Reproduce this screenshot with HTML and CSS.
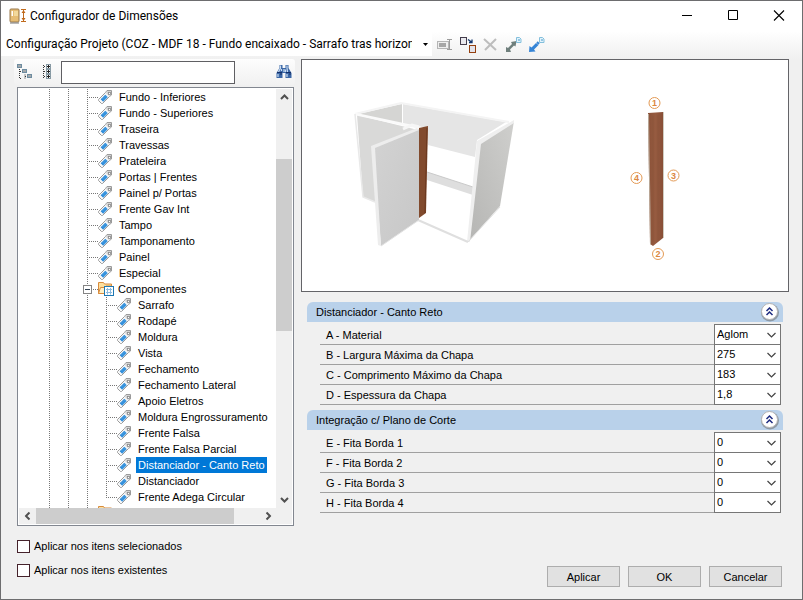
FILE: index.html
```html
<!DOCTYPE html>
<html lang="pt-BR">
<head>
<meta charset="utf-8">
<title>Configurador de Dimensões</title>
<link rel="stylesheet" href="styles.css">
</head>
<body>
<svg class="defs" aria-hidden="true">
  <symbol id="tag" viewBox="0 0 16 16">
    <path d="M1.500 10.500 8.500 3.500 10 1.500H14.500V6L12.500 7.500 5.500 14.500H4.500L1.500 11.500Z" fill="#f8f8f8" stroke="#9a9a9a"/>
    <path d="M10.500 2H14V5.500L12 7 9 4Z" fill="#d2d2d2"/>
    <rect x="11.500" y="3.500" width="2" height="2" fill="#fff" stroke="#888" stroke-width=".8"/>
    <path d="M3.700 10.300 8.300 5.700 10.700 8.200 6.200 12.700Z" fill="#2586d6"/>
    <path d="M5 10.300 9.300 6.500M6 11.500 10.300 7.500" stroke="#66b3ee" stroke-width=".6"/>
  </symbol>
  <symbol id="folder" viewBox="0 0 17 16">
    <path d="M1.500 12.500V1.500H6.500L7.500 3H14.500V12.500Z" fill="#fbdf9f" stroke="#d88b3c"/>
    <path d="M1.500 12.500 3.500 6.500H8L9 5H15V12.500Z" fill="#fff0c6" stroke="#d88b3c"/>
    <rect x="7.500" y="5.500" width="9" height="9" fill="#fff" stroke="#1e78b4"/>
    <path d="M9 8.500H15M9 11.500H15M10.500 7V13.500M13.500 7V13.500" stroke="#8bbbe0"/>
  </symbol>
  <symbol id="chev" viewBox="0 0 9 6"><path d="M1 1 4.500 4.500 8 1" fill="none" stroke="currentColor" stroke-width="2"/></symbol>
  <symbol id="chev-thin" viewBox="0 0 9 6"><path d="M.5 1 4.500 5 8.500 1" fill="none" stroke="currentColor" stroke-width="1.200"/></symbol>
  <symbol id="collapse" viewBox="0 0 20 20">
    <circle cx="10" cy="10.500" r="9" fill="#8d99a5"/>
    <circle cx="9.500" cy="9.500" r="8" fill="#fff" stroke="#b5b5b5"/>
    <path d="M6.500 9 9.500 6 12.500 9M6.500 13 9.500 10 12.500 13" fill="none" stroke="#1d2b80" stroke-width="1.500"/>
  </symbol>
</svg>
<div class="window">
  <header class="titlebar">
    <svg class="app-icon" viewBox="0 0 17 16"><rect x="1" y="1" width="9" height="13" rx="1" fill="#e6bd75" stroke="#98784c"/><path d="M2.500 3V8H4V3Z" fill="#fff"/><path d="M5 3H9V8H5Z" fill="#f3d99b"/><path d="M1 15H10" stroke="#777"/><path d="M12 1.500H17M12 13.500H17M14.500 2V13" stroke="#c06a1c"/><path d="M12.500 5 14.500 2 16.500 5ZM12.500 10 14.500 13 16.500 10Z" fill="#c06a1c"/></svg>
    <h1>Configurador de Dimensões</h1>
    <div class="window-buttons">
      <button type="button" aria-label="Minimizar"><svg viewBox="0 0 12 12"><path d="M1 5.500H11" stroke="#000"/></svg></button>
      <button type="button" aria-label="Maximizar"><svg viewBox="0 0 12 12"><path d="M1.500 .5H10.500V9.500H1.500Z" fill="none" stroke="#000"/></svg></button>
      <button type="button" aria-label="Fechar"><svg viewBox="0 0 12 12"><path d="M1 .5 11 10.500M11 .5 1 10.500" stroke="#000" stroke-width="1.100"/></svg></button>
    </div>
  </header>

  <div class="toolbar">
    <div class="project">
      <select aria-label="Configuração do projeto"><option>Configuração Projeto (COZ - MDF 18 - Fundo encaixado - Sarrafo tras horizontal)</option></select>
      <svg viewBox="0 0 5 3"><path d="M0 0H5L2.500 3Z"/></svg>
    </div>
    <button type="button" aria-label="Renomear"><svg viewBox="0 0 17 17"><rect x="1.500" y="5.500" width="11" height="7" fill="#eee" stroke="#b5b5b5"/><path d="M3 7H10V11H3Z" fill="#a6a6a6"/><path d="M11 3.500H16M11 13.500H16M13.500 4V13" stroke="#9b9b9b"/></svg></button>
    <button type="button" aria-label="Substituir"><svg viewBox="0 0 17 17"><rect x="1.500" y="1.500" width="6" height="7" fill="#e9e9ee" stroke="#443d4c"/><rect x="10.500" y="9.500" width="6" height="7" fill="#e3e3ea" stroke="#94400f"/><path d="M9 3.500 12.500 6M10 6.500H13V3.500" fill="none" stroke="#12366e" stroke-width="1.300"/></svg></button>
    <button type="button" aria-label="Excluir"><svg viewBox="0 0 17 17"><path d="M2 3 14 14M14 3 3 14" stroke="#bdbdbd" stroke-width="2"/></svg></button>
    <button type="button" aria-label="Exportar"><svg viewBox="0 0 17 17"><path d="M1 16V11L3 12 7 8 6 6 11.500 5 10.500 10.500 9 9.500 5 13.500 6 16Z" fill="#6f7f7c"/><path d="M11.500 1.500H14.500L16 3V6.500H11.500Z" fill="#e2f3fc" stroke="#83bfdc"/><path d="M13 4H15" stroke="#4a9bc8"/></svg></button>
    <button type="button" aria-label="Importar"><svg viewBox="0 0 17 17"><path d="M1 16 1.500 10 3.500 11.500 8 7 10.500 9 6 13.500 7.500 15.500Z" fill="#3584d6"/><path d="M9 6 11 8" stroke="#3584d6" stroke-width="2"/><path d="M11.500 1.500H14.500L16 3V6.500H11.500Z" fill="#e2f3fc" stroke="#83bfdc"/><path d="M13 4H15" stroke="#4a9bc8"/></svg></button>
  </div>

  <main class="content">
    <section class="navigator">
      <div class="search">
        <button type="button" aria-label="Recolher tudo"><svg viewBox="0 0 16 16"><path d="M2.500 5V15M8 10.500V15M3 7.500H5M3 14.500H5M8 12.500H10" fill="none" stroke="#333" stroke-dasharray="1 1"/><g fill="#eef5fb" stroke="#6d8ca0"><rect x=".5" y=".5" width="4" height="3"/><rect x="5.500" y="5.500" width="4" height="3"/><rect x="10.500" y="10.500" width="4" height="3"/></g><path d="M1 2H4M6 7H9M11 12H14" stroke="#333" stroke-width=".8"/></svg></button>
        <button type="button" aria-label="Expandir tudo"><svg viewBox="0 0 16 16"><path d="M4.500 1V15M5 2.500H8M5 7.500H8M5 12.500H8" fill="none" stroke="#333" stroke-dasharray="1 1"/><g fill="#f5f8fa" stroke="#889aa4"><rect x="7.500" y=".5" width="4" height="4"/><rect x="7.500" y="5.500" width="4" height="4"/><rect x="7.500" y="10.500" width="4" height="4"/></g><path d="M8 2.500H11M8 7.500H11M8 12.500H11M9.500 1V4M9.500 6V9M9.500 11V14" stroke="#222"/></svg></button>
        <input type="text" aria-label="Localizar item">
        <button type="button" class="find" aria-label="Localizar"><svg viewBox="0 0 16 16"><path d="M3.500 1H6.500V4H9.500V1H12.500V4L15.500 9V14H9.500V9H6.500V14H.5V9L3.500 4Z" fill="#3a66a5"/><path d="M4.500 1.500V4L2.500 8M11 1.500V4L11.500 8M2 10V13M11 10V13M8 5V8M5.500 5V7M9.500 5.500V8" stroke="#c9dcf2" stroke-width="1.200" fill="none"/><path d="M4 10H6M13 10H15M1 8.500H6M10 8.500H15" stroke="#142f67"/></svg></button>
      </div>

      <div class="tree">
        <div class="tree-view">
          <ul class="tree-root">
            <li><svg><use href="#tag"/></svg><span>Fundo - Inferiores</span></li>
            <li><svg><use href="#tag"/></svg><span>Fundo - Superiores</span></li>
            <li><svg><use href="#tag"/></svg><span>Traseira</span></li>
            <li><svg><use href="#tag"/></svg><span>Travessas</span></li>
            <li><svg><use href="#tag"/></svg><span>Prateleira</span></li>
            <li><svg><use href="#tag"/></svg><span>Portas | Frentes</span></li>
            <li><svg><use href="#tag"/></svg><span>Painel p/ Portas</span></li>
            <li><svg><use href="#tag"/></svg><span>Frente Gav Int</span></li>
            <li><svg><use href="#tag"/></svg><span>Tampo</span></li>
            <li><svg><use href="#tag"/></svg><span>Tamponamento</span></li>
            <li><svg><use href="#tag"/></svg><span>Painel</span></li>
            <li><svg><use href="#tag"/></svg><span>Especial</span></li>
            <li class="branch"><button type="button" class="toggle" aria-label="Recolher Componentes"></button><svg class="folder"><use href="#folder"/></svg><span>Componentes</span></li>
            <li class="group">
              <ul>
                <li><svg><use href="#tag"/></svg><span>Sarrafo</span></li>
                <li><svg><use href="#tag"/></svg><span>Rodapé</span></li>
                <li><svg><use href="#tag"/></svg><span>Moldura</span></li>
                <li><svg><use href="#tag"/></svg><span>Vista</span></li>
                <li><svg><use href="#tag"/></svg><span>Fechamento</span></li>
                <li><svg><use href="#tag"/></svg><span>Fechamento Lateral</span></li>
                <li><svg><use href="#tag"/></svg><span>Apoio Eletros</span></li>
                <li><svg><use href="#tag"/></svg><span>Moldura Engrossuramento</span></li>
                <li><svg><use href="#tag"/></svg><span>Frente Falsa</span></li>
                <li><svg><use href="#tag"/></svg><span>Frente Falsa Parcial</span></li>
                <li><svg><use href="#tag"/></svg><span class="selected">Distanciador - Canto Reto</span></li>
                <li><svg><use href="#tag"/></svg><span>Distanciador</span></li>
                <li><svg><use href="#tag"/></svg><span>Frente Adega Circular</span></li>
              </ul>
            </li>
            <li class="branch"><svg class="folder"><use href="#folder"/></svg></li>
          </ul>
        </div>
        <div class="vscroll">
          <button type="button" aria-label="Rolar para cima"><svg class="up"><use href="#chev"/></svg></button>
          <div class="vtrack"><div class="vthumb"></div></div>
          <button type="button" aria-label="Rolar para baixo"><svg><use href="#chev"/></svg></button>
        </div>
        <div class="hscroll">
          <button type="button" aria-label="Rolar para a esquerda"><svg class="left"><use href="#chev"/></svg></button>
          <div class="htrack"><div class="hthumb"></div></div>
          <button type="button" aria-label="Rolar para a direita"><svg class="right"><use href="#chev"/></svg></button>
        </div>
        <div class="corner"></div>
      </div>

      <div class="checks">
        <label><input type="checkbox">Aplicar nos itens selecionados</label>
        <label><input type="checkbox">Aplicar nos itens existentes</label>
      </div>
    </section>

    <section class="details">
      <div class="preview">
        <svg viewBox="0 0 486 231" role="img" aria-label="Módulo de canto e peça distanciadora">
          <defs>
            <linearGradient id="side" x1="1" y1="0" x2="0" y2="1"><stop offset="0" stop-color="#cfcfcd"/><stop offset="1" stop-color="#b5b5b3"/></linearGradient>
            <linearGradient id="door" x1="0" y1="0" x2="1" y2="1"><stop offset="0" stop-color="#d3d3d3"/><stop offset="1" stop-color="#c7c7c7"/></linearGradient>
            <linearGradient id="wood"><stop offset="0" stop-color="#8a5138"/><stop offset=".5" stop-color="#965b40"/><stop offset="1" stop-color="#884e36"/></linearGradient>
          </defs>
          <g transform="translate(-302 -60)">
            <path d="M358 114 402 104V124Z" fill="#d5d5d3"/>
            <path d="M357 115 418 130 375 147 376 202 363 197Z" fill="#d9d9d8"/>
            <path d="M403 104 506 122 477 140 475 157 428 145V128L403 124Z" fill="#e5e5e5"/>
            <path d="M427 172 473 187V195L427 180Z" fill="#dedede"/>
            <path d="M427 172 473 187" stroke="#cacaca"/>
            <path d="M355 114 401 103 509 122" fill="none" stroke="#f4f4f4" stroke-width="2"/>
            <path d="M355 114 421 128" stroke="#fafafa" stroke-width="2.500"/>
            <path d="M403 129 412 125 419 127" stroke="#f6f6f6" stroke-width="3" fill="none"/>
            <path d="M355 114 363 197 375 202" fill="none" stroke="#e9e9e9" stroke-width="1.500"/>
            <path d="M479 142 514 121 500 206 468 242Z" fill="url(#side)"/>
            <path d="M477 141 514 120V123L481 144 470 242H467Z" fill="#efefef"/>
            <path d="M418 220 468 242" stroke="#dfdfdf" stroke-width="2"/>
            <path d="M468 242 500 207" stroke="#e0e0e0"/>
            <path d="M419 128 428 126 426 213 419 218Z" fill="#814a2d"/>
            <path d="M427 128 425 213" stroke="#6a381f"/>
            <path d="M373 147 419 129V220L381 246Z" fill="url(#door)"/>
            <path d="M371 146 417 128 419 130 375 148 381 246 378 245Z" fill="#ededed"/>
            <path d="M381 246 419 220" stroke="#e2e2e2"/>
            <path d="M648 113 663 112V238L653 246 650 244Z" fill="url(#wood)"/>
            <path d="M648.500 114 650.500 244M663.500 112V238" stroke="#c4bfb0" stroke-width=".8"/>
            <path d="M653 116V242M658 115V240" stroke="#855037" stroke-width=".4"/>
            <g class="marker">
              <circle cx="654.500" cy="103" r="5.500"/><circle cx="658" cy="254" r="5.500"/><circle cx="673.500" cy="175.500" r="5.500"/><circle cx="636.500" cy="178" r="5.500"/>
              <text x="654.500" y="106">1</text><text x="658" y="257">2</text><text x="673.500" y="179">3</text><text x="636.500" y="181">4</text>
            </g>
          </g>
        </svg>
      </div>

      <div class="properties">
        <section class="panel">
          <h2>Distanciador - Canto Reto<button type="button" aria-label="Recolher"><svg><use href="#collapse"/></svg></button></h2>
          <div class="rows">
            <div class="row"><label for="a">A - Material</label><div class="field"><select id="a"><option>Aglom</option></select><svg><use href="#chev-thin"/></svg></div></div>
            <div class="row"><label for="b">B - Largura Máxima da Chapa</label><div class="field"><select id="b"><option>275</option></select><svg><use href="#chev-thin"/></svg></div></div>
            <div class="row"><label for="c">C - Comprimento Máximo da Chapa</label><div class="field"><select id="c"><option>183</option></select><svg><use href="#chev-thin"/></svg></div></div>
            <div class="row"><label for="d">D - Espessura da Chapa</label><div class="field"><select id="d"><option>1,8</option></select><svg><use href="#chev-thin"/></svg></div></div>
          </div>
        </section>
        <section class="panel">
          <h2>Integração c/ Plano de Corte<button type="button" aria-label="Recolher"><svg><use href="#collapse"/></svg></button></h2>
          <div class="rows">
            <div class="row"><label for="e">E - Fita Borda 1</label><div class="field"><select id="e"><option>0</option></select><svg><use href="#chev-thin"/></svg></div></div>
            <div class="row"><label for="f">F - Fita Borda 2</label><div class="field"><select id="f"><option>0</option></select><svg><use href="#chev-thin"/></svg></div></div>
            <div class="row"><label for="g">G - Fita Borda 3</label><div class="field"><select id="g"><option>0</option></select><svg><use href="#chev-thin"/></svg></div></div>
            <div class="row"><label for="h">H - Fita Borda 4</label><div class="field"><select id="h"><option>0</option></select><svg><use href="#chev-thin"/></svg></div></div>
          </div>
        </section>
      </div>

      <footer class="actions">
        <button type="button">Aplicar</button>
        <button type="button">OK</button>
        <button type="button">Cancelar</button>
      </footer>
    </section>
  </main>
</div>
</body>
</html>
```
FILE: styles.css
```css
* { box-sizing: border-box; }

body {
  margin: 0;
  font: 11px/16px "Liberation Sans", Arial, sans-serif;
  color: #000;
}

.defs { position: absolute; width: 0; height: 0; }

svg { display: block; flex: none; }

button, select, input { font: inherit; color: inherit; margin: 0; }

button {
  padding: 0;
  border: 0;
  background: none;
  display: flex;
  align-items: center;
  justify-content: center;
}

select {
  appearance: none;
  border: 0;
  border-radius: 0;
  background: #fff;
}

.window {
  display: flex;
  flex-direction: column;
  height: 100vh;
  border: 1px solid #6d6d6f;
  background: #f0f0f0;
}

.titlebar {
  display: flex;
  align-items: center;
  height: 30px;
  padding-left: 8px;
  background: #fff;
}

.app-icon { width: 17px; height: 16px; }

.titlebar h1 {
  margin: 0 auto 0 4px;
  font: 12px/16px Roboto, "Open Sans", sans-serif;
}

.window-buttons { display: flex; }
.window-buttons button { width: 46px; height: 28px; }
.window-buttons svg { width: 12px; height: 12px; }

.toolbar {
  display: flex;
  align-items: center;
  height: 28px;
  padding-bottom: 2px;
  background: linear-gradient(#fff, #f0f0f0);
}

.project {
  display: flex;
  align-items: center;
  width: 431px;
  height: 24px;
  padding-left: 5px;
  margin-right: 4px;
  background: #fff;
}

.project select {
  width: 406px;
  margin-right: 11px;
  padding: 0;
  font: 12px/20px Roboto, "Open Sans", sans-serif;
  text-overflow: clip;
}

.project svg { width: 5px; height: 3px; }
.toolbar button { margin-right: 6px; }
.toolbar button svg { width: 17px; height: 17px; }

.content {
  flex: 1;
  display: grid;
  grid-template-columns: 281px minmax(0, 1fr);
  gap: 6px;
  min-height: 0;
  padding: 0 13px 11px;
}

.navigator {
  display: flex;
  flex-direction: column;
  min-height: 0;
}

.search {
  display: flex;
  align-items: center;
  height: 26px;
  padding: 0 3px;
  border-radius: 3px;
  background: linear-gradient(#fdfdfd, #f1f1f1);
}

.search svg { width: 16px; height: 16px; }
.search button { margin-right: 6px; }

.search input {
  width: 174px;
  height: 23px;
  padding: 0 4px;
  border: 1px solid #5f5f63;
  background: #fff;
}

.search .find { margin: 0 0 0 auto; }

.tree {
  flex: 1;
  display: grid;
  grid-template: minmax(0, 1fr) 16px / minmax(0, 1fr) 16px;
  min-height: 0;
  margin: 2px 1px 0 3px;
  padding: 1px;
  border: 1px solid #828790;
  background: #fff;
}

.tree-view {
  --dots: repeating-linear-gradient(#777 0 1px, transparent 1px 2px);
  overflow: hidden;
  background:
    var(--dots) 30px 0 / 1px 100% no-repeat,
    var(--dots) 49px 0 / 1px 100% no-repeat,
    var(--dots) 68px 0 / 1px 100% no-repeat;
}

.tree ul { margin: 0; padding: 0; list-style: none; white-space: nowrap; }
.tree .tree-root { padding-left: 68px; }

.tree li:not(.group) {
  display: flex;
  align-items: center;
  height: 16px;
  padding-left: 10px;
  background: repeating-linear-gradient(90deg, #777 0 1px, transparent 1px 2px) 0 8px / 11px 1px no-repeat;
}

.tree li svg { width: 16px; height: 16px; }
.tree li span { margin-left: 4px; padding: 0 2px; }
.tree li .selected { background: #0078d7; color: #fff; }

.tree .group ul {
  margin-left: 19px;
  background: var(--dots) 0 0 / 1px calc(100% - 8px) no-repeat;
}

.tree li.branch { padding-left: 0; }
.tree li.branch .folder { width: 17px; margin-left: 10px; }
.tree li.branch span { margin-left: 2px; }

.toggle {
  width: 9px;
  height: 9px;
  margin-left: -4px;
  border: 1px solid #848484;
  background: linear-gradient(#345, #345) 1px 3px / 5px 1px no-repeat #fff;
}

.tree li.branch .toggle + .folder { margin-left: 5px; }

.vscroll { display: flex; flex-direction: column; background: #f0f0f0; color: #505050; }
.hscroll { display: flex; background: #f0f0f0; color: #505050; }
.corner { background: #f0f0f0; }
.vscroll button, .hscroll button { width: 16px; height: 16px; }
.vscroll svg, .hscroll svg { width: 9px; height: 6px; }
.up { transform: rotate(180deg); }
.left { transform: rotate(90deg); }
.right { transform: rotate(-90deg); }
.vtrack, .htrack { flex: 1; }
.vtrack { padding-top: 54px; }
.vthumb { height: 172px; background: #cdcdcd; }
.hthumb { width: 88%; height: 16px; margin-left: 1px; background: #cdcdcd; }

.checks {
  display: flex;
  flex-direction: column;
  gap: 8px;
  padding: 12px 0 10px 3px;
}

.checks label { display: flex; align-items: center; gap: 4px; }

.checks input {
  appearance: none;
  width: 13px;
  height: 13px;
  border: 1px solid #45222b;
  background: #fff;
}

.details { display: flex; flex-direction: column; min-width: 0; }

.preview {
  height: 233px;
  border: 1px solid #646468;
  background: #fff;
}

.preview svg { width: 100%; height: 100%; }
.marker circle { fill: #fff; stroke: #e39a55; }
.marker text { font-size: 9px; font-weight: bold; text-anchor: middle; fill: #dc8840; }

.properties {
  display: flex;
  flex-direction: column;
  gap: 5px;
  padding: 10px 6px 0;
}

.panel h2 {
  display: flex;
  align-items: center;
  justify-content: space-between;
  height: 20px;
  margin: 0;
  padding: 0 3px 0 9px;
  border-radius: 6px 6px 0 0;
  background: #b9d1ea;
  font-size: 11px;
  font-weight: normal;
}

.panel h2 svg { width: 20px; height: 20px; }

.rows { padding: 3px 2px 0 13px; }

.row { display: flex; height: 20px; border-bottom: 1px solid #a0a0a0; }
.row label { flex: 1; padding-left: 6px; line-height: 20px; }

.field {
  display: flex;
  align-items: center;
  width: 67px;
  margin: -1px 0;
  padding-right: 4px;
  border: 1px solid #767676;
  background: #fff;
}

.field select {
  flex: 1;
  min-width: 0;
  height: 19px;
  padding: 0 2px 2px;
}

.field svg { width: 9px; height: 6px; color: #444; }

.actions {
  display: flex;
  justify-content: flex-end;
  gap: 8px;
  margin-top: auto;
  padding: 0 7px 1px 0;
}

.actions button {
  width: 73px;
  height: 21px;
  border: 1px solid #adadad;
  background: #e1e1e1;
}
```
